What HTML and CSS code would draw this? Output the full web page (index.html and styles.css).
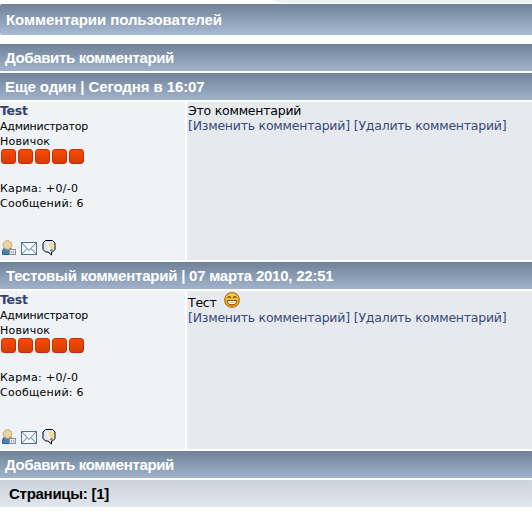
FILE: index.html
```
<!DOCTYPE html>
<html lang="ru">
<head>
<meta charset="utf-8">
<title>Комментарии пользователей</title>
<link rel="stylesheet" href="styles.css">
</head>
<body>
<svg class="defs" width="0" height="0" aria-hidden="true">
  <defs>
    <linearGradient id="gold" x1="0" y1="0" x2="0" y2="1"><stop offset="0" stop-color="#ffd95e"/><stop offset="1" stop-color="#ef9808"/></linearGradient>
    <symbol id="user" viewBox="0 0 16 16">
      <path d="M1.500 14.500V12q0-3.500 3-4.500h4q3 1 3 4.500v2.500z" fill="#4c80b0" stroke="#2e6090"/>
      <circle cx="6.500" cy="5" r="4.300" fill="#ecd4a0" stroke="#c7a974"/>
      <rect x="8.500" y="9.500" width="6" height="5" fill="#e6e6ea" stroke="#8f919f"/>
      <path d="M10.500 11v2.500M12.500 11v2.500" stroke="#aaaab4"/>
    </symbol>
    <symbol id="mail" viewBox="0 0 16 14">
      <rect x=".5" y="1.500" width="15" height="12" fill="#f0f6fa" stroke="#52728a"/>
      <path d="M1 2l7 7.500L15 2M1 13l5-5.500M15 13l-5-5.500" fill="none" stroke="#52728a" stroke-width=".9"/>
    </symbol>
    <symbol id="bubble" viewBox="0 0 14 16">
      <path d="M3.500.5h7l2.500 2.500v6.500l-2.500 2.500h-1v3l-3.500-3h-2.500L1 9.500V3z" fill="#dce7f2" stroke="#000"/>
      <circle cx="9" cy="6" r="3.300" fill="#f0d99a"/>
      <path d="M6 3q-1 5 3 6.500" fill="none" stroke="#fff" stroke-width="1.200"/>
      <path d="M8 10.500l2-1v2" fill="none" stroke="#555"/>
    </symbol>
    <symbol id="smile" viewBox="0 0 15 15">
      <circle cx="7.500" cy="7.500" r="6.900" fill="url(#gold)" stroke="#b87812" stroke-width="1.100"/>
      <path d="M3.500 5.700q1.500-2.800 3 0M8.500 5.700q1.500-2.800 3 0" fill="none" stroke="#6c3d06" stroke-width="1.100"/>
      <path d="M3 8h9q0 4-4.500 4t-4.500-4z" fill="#fff" stroke="#804a08" stroke-width=".9"/>
      <path d="M3.500 9.700h8" stroke="#c69a55" stroke-width=".6"/>
    </symbol>
  </defs>
</svg>
<div class="top-edge"></div>
<h1 class="bar title"><span>Комментарии пользователей</span></h1>
<main class="list">
  <div class="bar add"><span>Добавить комментарий</span></div>
  <div class="bar first"><span>Еще один | Сегодня в 16:07</span></div>
  <section class="comment">
    <div class="author">
      <a class="name">Test</a>
      <span class="role">Администратор</span>
      <span class="rank">Новичок</span>
      <div class="stars"><i></i><i></i><i></i><i></i><i></i></div>
      <span class="karma">Карма: +0/-0</span>
      <span class="posts">Сообщений: 6</span>
      <div class="icons"><svg width="16" height="16"><use href="#user"/></svg><svg width="16" height="14"><use href="#mail"/></svg><svg width="14" height="16"><use href="#bubble"/></svg></div>
    </div>
    <div class="body">
      <p><span>Это комментарий</span></p>
      <p class="links"><a>[Изменить комментарий]</a><a>[Удалить комментарий]</a></p>
    </div>
  </section>
  <div class="bar second"><span>Тестовый комментарий | 07 марта 2010, 22:51</span></div>
  <section class="comment">
    <div class="author">
      <a class="name">Test</a>
      <span class="role">Администратор</span>
      <span class="rank">Новичок</span>
      <div class="stars"><i></i><i></i><i></i><i></i><i></i></div>
      <span class="karma">Карма: +0/-0</span>
      <span class="posts">Сообщений: 6</span>
      <div class="icons"><svg width="16" height="16"><use href="#user"/></svg><svg width="16" height="14"><use href="#mail"/></svg><svg width="14" height="16"><use href="#bubble"/></svg></div>
    </div>
    <div class="body">
      <p class="with-smile"><span>Тест</span><svg width="16" height="16"><use href="#smile"/></svg></p>
      <p class="links"><a>[Изменить комментарий]</a><a>[Удалить комментарий]</a></p>
    </div>
  </section>
  <div class="bar add"><span>Добавить комментарий</span></div>
  <div class="bar pages"><span>Страницы: [1]</span></div>
</main>
</body>
</html>
```
FILE: styles.css
```
* { box-sizing: border-box; }
body { margin: 0; background: #fff; color: #000; font-family: "DejaVu Sans", sans-serif; font-size: 11px; overflow: hidden; }
.defs { position: absolute; }
.top-edge { height: 3px; margin: 0 0 1px 273px; background: #edf1f4; border-bottom-left-radius: 12px 3px; }
.bar { height: 27px; margin: 0; padding-left: 5px; background: linear-gradient(#6f8298, #a1b3cb); color: #fff; font: bold 15px/28px "Liberation Sans", sans-serif; white-space: nowrap; }
.title { height: 31px; padding-left: 6px; line-height: 32px; background: linear-gradient(#6f8298, #a9bbd3); border-radius: 2px 0 0 2px; letter-spacing: -0.08px; }
.add { letter-spacing: -0.35px; }
.first { letter-spacing: -0.09px; }
.second { padding-left: 6px; letter-spacing: -0.23px; }
.list { display: flex; flex-direction: column; gap: 2px; margin-top: 9px; }
.comment { display: grid; grid-template-columns: 185px 1fr; gap: 2px; height: 158px; }
.author { display: flex; flex-direction: column; align-items: flex-start; background: #eff3f6; line-height: 15px; white-space: nowrap; padding-top: 1px; }
.name { color: #33446c; font-size: 12.5px; font-weight: bold; letter-spacing: -0.25px; margin-bottom: 1px; }
.role { letter-spacing: -0.25px; }
.rank { letter-spacing: 0.25px; }
.karma { letter-spacing: 0.3px; }
.posts { letter-spacing: 0.25px; }
.stars { display: flex; gap: 2px; margin: 0 0 17px 1px; }
.stars i { width: 15px; height: 15px; border: 1px solid #c23203; border-radius: 3px; background: linear-gradient(#fc4a03, #d43c02); }
.icons { display: flex; align-items: center; gap: 4px; margin: 29px 0 0 1px; }
.icons svg:last-child { margin-left: 1px; }
.body { background: #e6eaef; font-size: 12.5px; letter-spacing: -0.23px; line-height: 15px; padding: 1px 0 0 1px; white-space: nowrap; }
.body p { margin: 0; display: flex; }
.links { gap: 4px; color: #394a79; }
.with-smile { height: 18px; line-height: 21px; gap: 7px; }
.pages { padding-left: 9px; color: #000; background: linear-gradient(#ced3da, #e0e6ee); letter-spacing: -0.27px; }
```
